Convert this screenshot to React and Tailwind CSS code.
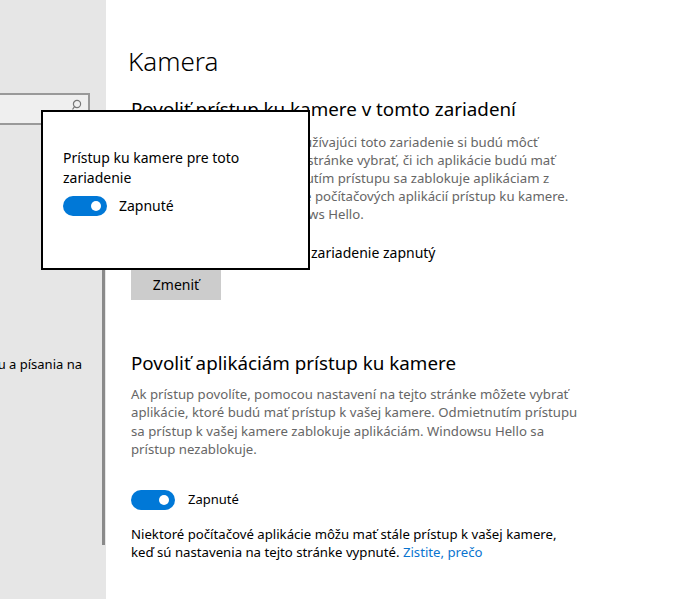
import React from "react";

function Toggle() {
  return (
    <div className="w-[44px] h-[20px] rounded-full bg-[#0078d7] flex items-center justify-end pr-[6px] shrink-0">
      <div className="w-[10px] h-[10px] rounded-full bg-white" />
    </div>
  );
}

export default function App() {
  return (
    <div
      className="relative w-[677px] h-[599px] flex bg-white text-black overflow-hidden"
      style={{ fontFamily: '"Noto Sans", "Segoe UI", sans-serif' }}
    >
      {/* Left navigation */}
      <div className="w-[106px] h-full bg-[#e6e6e6] flex shrink-0">
        <div className="flex-1 flex flex-col min-w-0">
          <div className="mt-[93px] -ml-[4px] w-[94px] h-[32px] border-2 border-[#999999] bg-[#efefef] flex items-start justify-end pr-[6px] pt-[4px]">
            <svg width="10" height="12" viewBox="0 0 10 12" fill="none" stroke="#777" strokeWidth="1.2">
              <circle cx="5" cy="5" r="3.6" />
              <path d="M2.5 7.6 L0.5 10.5" />
            </svg>
          </div>
          <div className="mt-[230px] flex justify-end overflow-hidden whitespace-nowrap pr-[20px] text-[13px] leading-[18px]">
            Zobrazenie rukopisu a písania na
          </div>
        </div>
        <div className="w-[3px] mt-[125px] h-[420px] bg-[#8a8a8a] shrink-0" />
        <div className="w-[1px] shrink-0" />
      </div>

      {/* Main content */}
      <div className="flex-1 pl-[25px] pt-[43px] flex flex-col items-start">
        <h1 className="-ml-[3px] text-[26px] font-light leading-[36px]">Kamera</h1>
        <h2 className="mt-[17px] text-[18.8px] leading-[26px]">Povoliť prístup ku kamere v tomto zariadení</h2>
        <p className="mt-[11px] text-[13.2px] leading-[18px] text-[#666666] whitespace-nowrap">
          Ak povolíte prístup, ľudia používajúci toto zariadenie si budú môcť
          <br />
          pomocou nastavení na tejto stránke vybrať, či ich aplikácie budú mať
          <br />
          prístup ku kamere. Odmietnutím prístupu sa zablokuje aplikáciam z
          <br />
          Microsoft Storu a tiež väčšine počítačových aplikácií prístup ku kamere.
          <br />
          Týmto sa nezablokuje Windows Hello.
        </p>
        <p className="mt-[21px] text-[14px] leading-[18.5px]">Prístup ku kamere pre toto zariadenie zapnutý</p>
        <button className="mt-[6px] w-[90px] h-[31px] bg-[#cccccc] text-[14px] flex items-center justify-center">
          Zmeniť
        </button>
        <h2 className="mt-[50px] text-[18.8px] leading-[26px]">Povoliť aplikáciám prístup ku kamere</h2>
        <p className="mt-[9px] text-[13.2px] leading-[18.5px] text-[#666666] whitespace-nowrap">
          Ak prístup povolíte, pomocou nastavení na tejto stránke môžete vybrať
          <br />
          aplikácie, ktoré budú mať prístup k vašej kamere. Odmietnutím prístupu
          <br />
          sa prístup k vašej kamere zablokuje aplikáciám. Windowsu Hello sa
          <br />
          prístup nezablokuje.
        </p>
        <div className="mt-[31px] flex items-center gap-[13px]">
          <Toggle />
          <span className="text-[13px]">Zapnuté</span>
        </div>
        <p className="mt-[15px] text-[13.2px] leading-[18.5px] whitespace-nowrap">
          Niektoré počítačové aplikácie môžu mať stále prístup k vašej kamere,
          <br />
          keď sú nastavenia na tejto stránke vypnuté.{" "}
          <span className="text-[#0a74cf]">Zistite, prečo</span>
        </p>
      </div>

      {/* Flyout over content */}
      <div className="absolute left-[41px] top-[110px] w-[269px] h-[160px] border-2 border-black bg-white pl-[20px] pt-[36px]">
        <div className="text-[14px] leading-[20px] w-[200px]">Prístup ku kamere pre toto zariadenie</div>
        <div className="mt-[7px] flex items-center gap-[12px]">
          <Toggle />
          <span className="text-[14px]">Zapnuté</span>
        </div>
      </div>
    </div>
  );
}
